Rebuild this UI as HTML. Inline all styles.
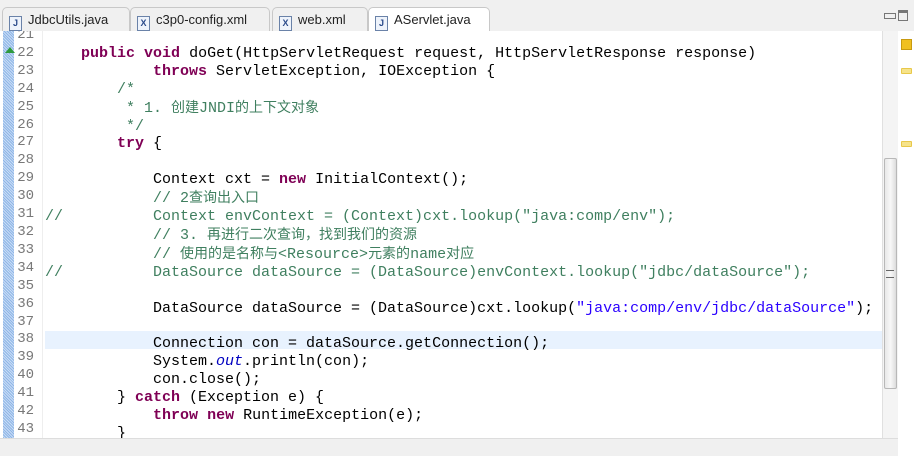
<!DOCTYPE html>
<html><head><meta charset="utf-8"><style>
body{margin:0;width:914px;height:455px;overflow:hidden;background:#fff;font-family:"Liberation Sans",sans-serif;position:relative}
.tabs{position:absolute;left:0;top:0;width:914px;height:31px;background:#f0f0f0;border-bottom:1px solid #c8c8c8}
.tab{position:absolute;top:7px;height:24px;border:1px solid #c8c8c8;border-bottom:none;border-radius:5px 5px 0 0;background:#f0f0f0;font-size:13px;line-height:24px;color:#222}
.tab .ic{display:inline-block;width:11px;height:13px;border:1px solid #6a82a8;background:#eef3fb;margin:0 6px 0 6px;vertical-align:-2px;font-size:9px;line-height:13px;text-align:center;color:#2a4a8a;font-weight:bold}
.tab.act{background:#fff;height:25px}
.code{position:absolute;left:0;top:31px;width:882px;height:407px;overflow:hidden;background:#fff}
.bar{position:absolute;left:3px;top:0;width:11px;height:407px;background:repeating-linear-gradient(45deg,#8fb6e6 0 1px,#c8dcf6 1px 2px)}
.gut{position:absolute;left:42px;top:0;width:1px;height:407px;background:#eee}
.hl{position:absolute;left:45px;top:300px;width:837px;height:18px;background:#e8f2fe}
.lines{position:absolute;left:0;top:-4px;font-family:"Liberation Mono","Noto Sans CJK SC",monospace;font-size:15px;line-height:17.9px;white-space:pre}
.ln{position:absolute;left:12px;width:22px;text-align:right;color:#787878;font-size:14px}
.tx{position:absolute;left:45px;color:#000}
.k{color:#7f0055;font-weight:bold}.c{color:#3f7f5f}.s{color:#2a00ff}.f{color:#0000c0;font-style:italic}
.cj{font-family:"Noto Sans CJK SC",sans-serif;font-size:14px}
.vs{position:absolute;left:882px;top:31px;width:16px;height:407px;background:#f4f4f4;border-left:1px solid #e0e0e0}
.thumb{position:absolute;left:884px;top:158px;width:13px;height:231px;background:linear-gradient(90deg,#e8e8e8,#f8f8f8,#dcdcdc);border:1px solid #b8b8b8;border-radius:2px;box-sizing:border-box}
.ov{position:absolute;left:898px;top:31px;width:16px;height:424px;background:#fff}
.hs{position:absolute;left:0;top:438px;width:898px;height:17px;background:#f0f0f0;border-top:1px solid #ddd}
.m{position:absolute;left:901px;width:9px;height:4px;background:#f6e38a;border:1px solid #e8c84a;border-radius:1px}
</style></head><body>
<div class="tabs">
<div class="tab" style="left:2px;width:126px"><span class="ic">J</span>JdbcUtils.java</div>
<div class="tab" style="left:130px;width:138px"><span class="ic">X</span>c3p0-config.xml</div>
<div class="tab" style="left:272px;width:94px"><span class="ic">X</span>web.xml</div>
<div class="tab act" style="left:368px;width:120px"><span class="ic">J</span>AServlet.java <span style="color:#888;margin-left:4px">☒</span></div>
<div style="position:absolute;left:884px;top:13px;width:10px;height:4px;border:1px solid #777"></div>
<div style="position:absolute;left:898px;top:10px;width:10px;height:11px;border:1px solid #777;border-top-width:3px;box-sizing:border-box"></div>
</div>
<div class="code">
<div class="bar"></div><div class="gut"></div><div class="hl"></div>
<div style="position:absolute;left:5px;top:16px;width:0;height:0;border-left:5px solid transparent;border-right:5px solid transparent;border-bottom:6px solid #2e9a3e"></div>
<div class="lines">
<div class="ln" style="top:0">21
22
23
24
25
26
27
28
29
30
31
32
33
34
35
36
37
38
39
40
41
42
43</div>
<div class="tx" style="top:0">
    <span class="k">public</span> <span class="k">void</span> doGet(HttpServletRequest request, HttpServletResponse response)
            <span class="k">throws</span> ServletException, IOException {
        <span class="c">/*</span>
<span class="c">         * 1. <span class="cj">创建</span>JNDI<span class="cj">的上下文对象</span></span>
<span class="c">         */</span>
        <span class="k">try</span> {

            Context cxt = <span class="k">new</span> InitialContext();
            <span class="c">// 2<span class="cj">查询出入口</span></span>
<span class="c">//          Context envContext = (Context)cxt.lookup("java:comp/env");</span>
            <span class="c">// 3. <span class="cj">再进行二次查询，找到我们的资源</span></span>
            <span class="c">// <span class="cj">使用的是名称与</span>&lt;Resource&gt;<span class="cj">元素的</span>name<span class="cj">对应</span></span>
<span class="c">//          DataSource dataSource = (DataSource)envContext.lookup("jdbc/dataSource");</span>

            DataSource dataSource = (DataSource)cxt.lookup(<span class="s">"java:comp/env/jdbc/dataSource"</span>);

            Connection con = dataSource.getConnection();
            System.<span class="f">out</span>.println(con);
            con.close();
        } <span class="k">catch</span> (Exception e) {
            <span class="k">throw</span> <span class="k">new</span> RuntimeException(e);
        }</div>
</div>
</div>
<div class="vs"></div><div class="thumb"></div>
<div style="position:absolute;left:886px;top:270px;width:8px;height:6px;border-top:1px solid #666;border-bottom:1px solid #666"></div>
<div class="ov"><div style="position:absolute;left:3px;top:8px;width:9px;height:9px;background:#f0c020;border:1px solid #c89a10"></div></div>
<div class="m" style="top:68px"></div><div class="m" style="top:141px"></div>
<div class="hs"></div>
</body></html>
